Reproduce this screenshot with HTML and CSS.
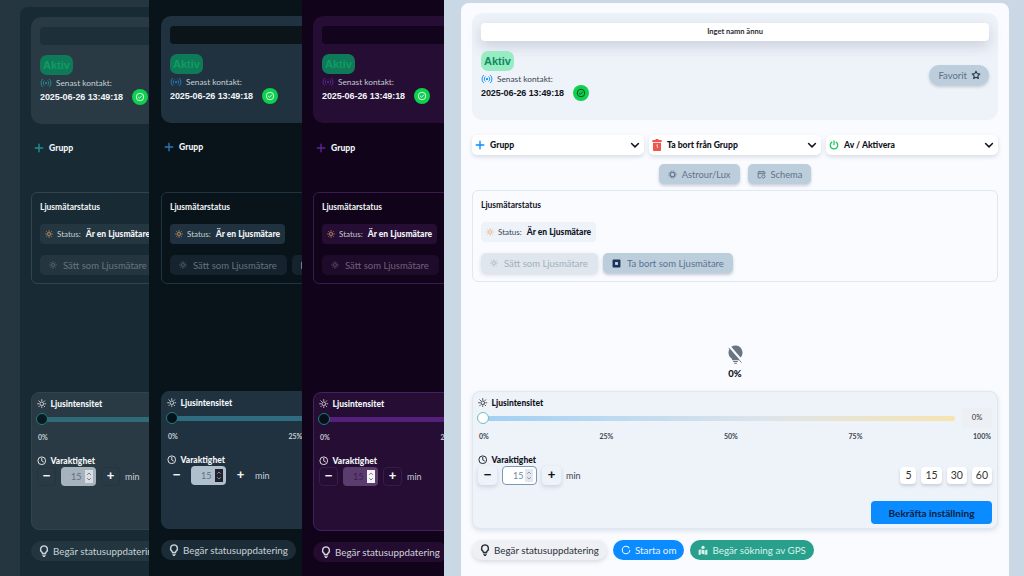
FILE: index.html
```html
<!DOCTYPE html>
<html lang="sv">
<head>
<meta charset="utf-8">
<title>Enhet</title>
<link rel="stylesheet" href="styles.css">
</head>
<body>
<svg class="defs" width="0" height="0">
  <symbol id="i-plus" viewBox="0 0 16 16"><path d="M8 2v12M2 8h12" fill="none" stroke="currentColor" stroke-width="2.200" stroke-linecap="round"/></symbol>
  <symbol id="i-chev" viewBox="0 0 16 16"><path d="M2.500 5.500 8 11l5.500-5.500" fill="none" stroke="currentColor" stroke-width="2.400" stroke-linecap="round" stroke-linejoin="round"/></symbol>
  <symbol id="i-trash" viewBox="0 0 14 18"><path d="M5 0h4l.5 1.500H13a1 1 0 0 1 1 1V4.500H0V2.500a1 1 0 0 1 1-1h3.500zM1 5.500h12V17a1 1 0 0 1-1 1H2a1 1 0 0 1-1-1z" fill="currentColor"/><path d="M6 9.500 7.500 8.500v5" fill="none" stroke="#fff" stroke-width="1"/></symbol>
  <symbol id="i-power" viewBox="0 0 16 16"><path d="M8 1.500v6M4.500 3.500a6 6 0 1 0 7 0" fill="none" stroke="currentColor" stroke-width="2" stroke-linecap="round"/></symbol>
  <symbol id="i-gear" viewBox="0 0 16 16"><circle cx="8" cy="8" r="4" fill="none" stroke="currentColor" stroke-width="2"/><circle cx="8" cy="8" r="6.300" fill="none" stroke="currentColor" stroke-width="1.400" stroke-dasharray="2 1.300"/></symbol>
  <symbol id="i-cal" viewBox="0 0 16 16"><path d="M7 14H3a1 1 0 0 1-1-1V4a1 1 0 0 1 1-1h10a1 1 0 0 1 1 1v3M2 6.500h12M5 1.500v3M11 1.500v3" fill="none" stroke="currentColor" stroke-width="1.600"/><circle cx="11.500" cy="11.500" r="2.800" fill="none" stroke="currentColor" stroke-width="1.600"/></symbol>
  <symbol id="i-sun" viewBox="0 0 16 16"><circle cx="8" cy="8" r="3" fill="none" stroke="currentColor" stroke-width="1.300"/><path d="M8 1v2M8 13v2M1 8h2M13 8h2M3 3l1.500 1.500M11.500 11.500 13 13M3 13l1.500-1.500M11.500 4.500 13 3" stroke="currentColor" stroke-width="1.200" stroke-linecap="round"/></symbol>
  <symbol id="i-signal" viewBox="0 0 16 16"><circle cx="8" cy="8" r="1.500" fill="currentColor"/><path d="M5.500 5a4 4 0 0 0 0 6M10.500 5a4 4 0 0 1 0 6M3.300 3a7 7 0 0 0 0 10M12.700 3a7 7 0 0 1 0 10" fill="none" stroke="currentColor" stroke-width="1.200" stroke-linecap="round"/></symbol>
  <symbol id="i-check" viewBox="0 0 16 16"><circle cx="8" cy="8" r="6" fill="none" stroke="currentColor" stroke-width="1.400"/><path d="m5.500 8.300 1.800 1.700 3.300-3.600" fill="none" stroke="currentColor" stroke-width="1.400" stroke-linecap="round" stroke-linejoin="round"/></symbol>
  <symbol id="i-star" viewBox="0 0 16 16"><path d="m8 1.800 1.900 4 4.400.5-3.300 3 .9 4.400L8 11.500l-3.900 2.200.9-4.400-3.300-3 4.400-.5z" fill="none" stroke="currentColor" stroke-width="1.700" stroke-linejoin="round"/></symbol>
  <symbol id="i-clock" viewBox="0 0 16 16"><circle cx="8" cy="8" r="6.500" fill="none" stroke="currentColor" stroke-width="1.500"/><path d="M8 4v4.300l2.800 1.500" fill="none" stroke="currentColor" stroke-width="1.500" stroke-linecap="round"/></symbol>
  <symbol id="i-bulb" viewBox="0 0 16 20"><path d="M8 1.500a5.800 5.800 0 0 0-3.600 10.300c.8.700 1.100 1.500 1.100 2.400h5c0-.9.300-1.700 1.100-2.400A5.800 5.800 0 0 0 8 1.500z" fill="none" stroke="currentColor" stroke-width="2.400"/><path d="M5 17h6M6.200 19.200h3.600" stroke="currentColor" stroke-width="1.700"/></symbol>
  <symbol id="i-bulboff" viewBox="0 0 16 20"><path d="M8 .5a7.500 7.500 0 0 0-4.800 13.200c.8.700 1.300 1.400 1.300 2.300h7c0-.9.500-1.600 1.300-2.300A7.500 7.500 0 0 0 8 .5z" fill="currentColor"/><path d="M5.500 17.500h5M6.500 19.300h3" stroke="currentColor" stroke-width="1.200"/><path d="m1.500 1.500 14 16" stroke="#fafbff" stroke-width="2.600"/><path d="m.8 3 13.700 15.800" stroke="currentColor" stroke-width=".9"/></symbol>
  <symbol id="i-ring" viewBox="0 0 16 16"><circle cx="8" cy="8" r="6" fill="none" stroke="currentColor" stroke-width="1.700" stroke-dasharray="34 4"/></symbol>
  <symbol id="i-map" viewBox="0 0 16 16"><path d="M1 8 4.500 6.800V15L1 16zM5.500 7l5 1.300V15l-5-.9zM11.500 8.300 15 7v8l-3.500 1z" fill="currentColor"/><circle cx="8" cy="3.800" r="2.700" fill="currentColor"/></symbol>
  <symbol id="i-box" viewBox="0 0 16 16"><rect x="1" y="1" width="14" height="14" rx="1.500" fill="currentColor"/><rect x="5.500" y="5.500" width="5" height="5" fill="#cfdbe6"/></symbol>
  <symbol id="i-spin" viewBox="0 0 8 14"><path d="m2 5.200 2-2 2 2M2 8.800l2 2 2-2" fill="none" stroke="currentColor" stroke-width="1"/></symbol>
</svg>

<section class="shot shot-one theme-teal dark">
  <div class="window">
    <header class="card">
      <div class="name-bar"></div>
      <div class="card-row">
        <div class="contact">
          <span class="badge">Aktiv</span>
          <div class="last"><svg class="ic signal"><use href="#i-signal"/></svg><span>Senast kontakt:</span></div>
          <div class="stamp"><b>2025-06-26 13:49:18</b><span class="ok"><svg class="ic"><use href="#i-check"/></svg></span></div>
        </div>
        <button class="fav">Favorit <svg class="ic"><use href="#i-star"/></svg></button>
      </div>
    </header>
    <div class="selects">
      <div class="select"><svg class="ic accent"><use href="#i-plus"/></svg><span>Grupp</span><svg class="ic chev"><use href="#i-chev"/></svg></div>
      <div class="select"><svg class="ic red"><use href="#i-trash"/></svg><span>Ta bort från Grupp</span><svg class="ic chev"><use href="#i-chev"/></svg></div>
      <div class="select"><svg class="ic green"><use href="#i-power"/></svg><span>Av / Aktivera</span><svg class="ic chev"><use href="#i-chev"/></svg></div>
    </div>
    <div class="modes">
      <button class="mode wide"><svg class="ic"><use href="#i-gear"/></svg>Astrour/Lux</button>
      <button class="mode"><svg class="ic"><use href="#i-cal"/></svg>Schema</button>
    </div>
    <div class="meter">
      <h3>Ljusmätarstatus</h3>
      <div class="chip"><svg class="ic amber"><use href="#i-sun"/></svg><span class="chip-key">Status:</span><b>Är en Ljusmätare</b></div>
      <div class="meter-btns">
        <button class="meter-btn off"><svg class="ic"><use href="#i-sun"/></svg>Sätt som Ljusmätare</button>
        <button class="meter-btn on"><svg class="ic navy"><use href="#i-box"/></svg><span>Ta bort som Ljusmätare</span></button>
      </div>
    </div>
    <div class="lamp"><svg class="ic lamp-ic"><use href="#i-bulboff"/></svg><b>0%</b></div>
    <div class="dim">
      <h4><svg class="ic"><use href="#i-sun"/></svg>Ljusintensitet</h4>
      <div class="slider"><div class="track"><i class="thumb"></i></div><span class="value">0%</span></div>
      <div class="ticks"><span>0%</span><span>25%</span><span>50%</span><span>75%</span><span>100%</span></div>
      <h4 class="dur"><svg class="ic"><use href="#i-clock"/></svg>Varaktighet</h4>
      <div class="dur-row">
        <button class="step">−</button>
        <div class="num"><span>15</span><svg class="spin"><use href="#i-spin"/></svg></div>
        <button class="step">+</button>
        <span class="unit">min</span>
        <div class="presets"><button>5</button><button>15</button><button>30</button><button>60</button></div>
      </div>
      <div class="confirm-row"><button class="confirm">Bekräfta inställning</button></div>
    </div>
    <footer class="actions">
      <button class="pill grey"><svg class="ic"><use href="#i-bulb"/></svg>Begär statusuppdatering</button>
      <button class="pill blue"><svg class="ic"><use href="#i-ring"/></svg><span>Starta om</span></button>
      <button class="pill teal"><svg class="ic"><use href="#i-map"/></svg>Begär sökning av GPS</button>
    </footer>
  </div>
</section>

<section class="shot shot-two theme-navy dark">
  <div class="window">
    <header class="card">
      <div class="name-bar"></div>
      <div class="card-row">
        <div class="contact">
          <span class="badge">Aktiv</span>
          <div class="last"><svg class="ic signal"><use href="#i-signal"/></svg><span>Senast kontakt:</span></div>
          <div class="stamp"><b>2025-06-26 13:49:18</b><span class="ok"><svg class="ic"><use href="#i-check"/></svg></span></div>
        </div>
        <button class="fav">Favorit <svg class="ic"><use href="#i-star"/></svg></button>
      </div>
    </header>
    <div class="selects">
      <div class="select"><svg class="ic accent"><use href="#i-plus"/></svg><span>Grupp</span><svg class="ic chev"><use href="#i-chev"/></svg></div>
      <div class="select"><svg class="ic red"><use href="#i-trash"/></svg><span>Ta bort från Grupp</span><svg class="ic chev"><use href="#i-chev"/></svg></div>
      <div class="select"><svg class="ic green"><use href="#i-power"/></svg><span>Av / Aktivera</span><svg class="ic chev"><use href="#i-chev"/></svg></div>
    </div>
    <div class="modes">
      <button class="mode wide"><svg class="ic"><use href="#i-gear"/></svg>Astrour/Lux</button>
      <button class="mode"><svg class="ic"><use href="#i-cal"/></svg>Schema</button>
    </div>
    <div class="meter">
      <h3>Ljusmätarstatus</h3>
      <div class="chip"><svg class="ic amber"><use href="#i-sun"/></svg><span class="chip-key">Status:</span><b>Är en Ljusmätare</b></div>
      <div class="meter-btns">
        <button class="meter-btn off"><svg class="ic"><use href="#i-sun"/></svg>Sätt som Ljusmätare</button>
        <button class="meter-btn on"><svg class="ic navy"><use href="#i-box"/></svg><span>Ta bort som Ljusmätare</span></button>
      </div>
    </div>
    <div class="lamp"><svg class="ic lamp-ic"><use href="#i-bulboff"/></svg><b>0%</b></div>
    <div class="dim">
      <h4><svg class="ic"><use href="#i-sun"/></svg>Ljusintensitet</h4>
      <div class="slider"><div class="track"><i class="thumb"></i></div><span class="value">0%</span></div>
      <div class="ticks"><span>0%</span><span>25%</span><span>50%</span><span>75%</span><span>100%</span></div>
      <h4 class="dur"><svg class="ic"><use href="#i-clock"/></svg>Varaktighet</h4>
      <div class="dur-row">
        <button class="step">−</button>
        <div class="num"><span>15</span><svg class="spin"><use href="#i-spin"/></svg></div>
        <button class="step">+</button>
        <span class="unit">min</span>
        <div class="presets"><button>5</button><button>15</button><button>30</button><button>60</button></div>
      </div>
      <div class="confirm-row"><button class="confirm">Bekräfta inställning</button></div>
    </div>
    <footer class="actions">
      <button class="pill grey"><svg class="ic"><use href="#i-bulb"/></svg>Begär statusuppdatering</button>
      <button class="pill blue"><svg class="ic"><use href="#i-ring"/></svg><span>Starta om</span></button>
      <button class="pill teal"><svg class="ic"><use href="#i-map"/></svg>Begär sökning av GPS</button>
    </footer>
  </div>
</section>

<section class="shot shot-three theme-plum dark">
  <div class="window">
    <header class="card">
      <div class="name-bar"></div>
      <div class="card-row">
        <div class="contact">
          <span class="badge">Aktiv</span>
          <div class="last"><svg class="ic signal"><use href="#i-signal"/></svg><span>Senast kontakt:</span></div>
          <div class="stamp"><b>2025-06-26 13:49:18</b><span class="ok"><svg class="ic"><use href="#i-check"/></svg></span></div>
        </div>
        <button class="fav">Favorit <svg class="ic"><use href="#i-star"/></svg></button>
      </div>
    </header>
    <div class="selects">
      <div class="select"><svg class="ic accent"><use href="#i-plus"/></svg><span>Grupp</span><svg class="ic chev"><use href="#i-chev"/></svg></div>
      <div class="select"><svg class="ic red"><use href="#i-trash"/></svg><span>Ta bort från Grupp</span><svg class="ic chev"><use href="#i-chev"/></svg></div>
      <div class="select"><svg class="ic green"><use href="#i-power"/></svg><span>Av / Aktivera</span><svg class="ic chev"><use href="#i-chev"/></svg></div>
    </div>
    <div class="modes">
      <button class="mode wide"><svg class="ic"><use href="#i-gear"/></svg>Astrour/Lux</button>
      <button class="mode"><svg class="ic"><use href="#i-cal"/></svg>Schema</button>
    </div>
    <div class="meter">
      <h3>Ljusmätarstatus</h3>
      <div class="chip"><svg class="ic amber"><use href="#i-sun"/></svg><span class="chip-key">Status:</span><b>Är en Ljusmätare</b></div>
      <div class="meter-btns">
        <button class="meter-btn off"><svg class="ic"><use href="#i-sun"/></svg>Sätt som Ljusmätare</button>
        <button class="meter-btn on"><svg class="ic navy"><use href="#i-box"/></svg><span>Ta bort som Ljusmätare</span></button>
      </div>
    </div>
    <div class="lamp"><svg class="ic lamp-ic"><use href="#i-bulboff"/></svg><b>0%</b></div>
    <div class="dim">
      <h4><svg class="ic"><use href="#i-sun"/></svg>Ljusintensitet</h4>
      <div class="slider"><div class="track"><i class="thumb"></i></div><span class="value">0%</span></div>
      <div class="ticks"><span>0%</span><span>25%</span><span>50%</span><span>75%</span><span>100%</span></div>
      <h4 class="dur"><svg class="ic"><use href="#i-clock"/></svg>Varaktighet</h4>
      <div class="dur-row">
        <button class="step">−</button>
        <div class="num"><span>15</span><svg class="spin"><use href="#i-spin"/></svg></div>
        <button class="step">+</button>
        <span class="unit">min</span>
        <div class="presets"><button>5</button><button>15</button><button>30</button><button>60</button></div>
      </div>
      <div class="confirm-row"><button class="confirm">Bekräfta inställning</button></div>
    </div>
    <footer class="actions">
      <button class="pill grey"><svg class="ic"><use href="#i-bulb"/></svg>Begär statusuppdatering</button>
      <button class="pill blue"><svg class="ic"><use href="#i-ring"/></svg><span>Starta om</span></button>
      <button class="pill teal"><svg class="ic"><use href="#i-map"/></svg>Begär sökning av GPS</button>
    </footer>
  </div>
</section>

<section class="shot shot-four theme-light">
  <div class="window">
    <header class="card">
      <div class="name-bar">Inget namn ännu</div>
      <div class="card-row">
        <div class="contact">
          <span class="badge">Aktiv</span>
          <div class="last"><svg class="ic signal"><use href="#i-signal"/></svg><span>Senast kontakt:</span></div>
          <div class="stamp"><b>2025-06-26 13:49:18</b><span class="ok"><svg class="ic"><use href="#i-check"/></svg></span></div>
        </div>
        <button class="fav">Favorit <svg class="ic"><use href="#i-star"/></svg></button>
      </div>
    </header>
    <div class="selects">
      <div class="select"><svg class="ic accent"><use href="#i-plus"/></svg><span>Grupp</span><svg class="ic chev"><use href="#i-chev"/></svg></div>
      <div class="select"><svg class="ic red"><use href="#i-trash"/></svg><span>Ta bort från Grupp</span><svg class="ic chev"><use href="#i-chev"/></svg></div>
      <div class="select"><svg class="ic green"><use href="#i-power"/></svg><span>Av / Aktivera</span><svg class="ic chev"><use href="#i-chev"/></svg></div>
    </div>
    <div class="modes">
      <button class="mode wide"><svg class="ic"><use href="#i-gear"/></svg>Astrour/Lux</button>
      <button class="mode"><svg class="ic"><use href="#i-cal"/></svg>Schema</button>
    </div>
    <div class="meter">
      <h3>Ljusmätarstatus</h3>
      <div class="chip"><svg class="ic amber"><use href="#i-sun"/></svg><span class="chip-key">Status:</span><b>Är en Ljusmätare</b></div>
      <div class="meter-btns">
        <button class="meter-btn off"><svg class="ic"><use href="#i-sun"/></svg>Sätt som Ljusmätare</button>
        <button class="meter-btn on"><svg class="ic navy"><use href="#i-box"/></svg><span>Ta bort som Ljusmätare</span></button>
      </div>
    </div>
    <div class="lamp"><svg class="ic lamp-ic"><use href="#i-bulboff"/></svg><b>0%</b></div>
    <div class="dim">
      <h4><svg class="ic"><use href="#i-sun"/></svg>Ljusintensitet</h4>
      <div class="slider"><div class="track"><i class="thumb"></i></div><span class="value">0%</span></div>
      <div class="ticks"><span>0%</span><span>25%</span><span>50%</span><span>75%</span><span>100%</span></div>
      <h4 class="dur"><svg class="ic"><use href="#i-clock"/></svg>Varaktighet</h4>
      <div class="dur-row">
        <button class="step">−</button>
        <div class="num"><span>15</span><svg class="spin"><use href="#i-spin"/></svg></div>
        <button class="step">+</button>
        <span class="unit">min</span>
        <div class="presets"><button>5</button><button>15</button><button>30</button><button>60</button></div>
      </div>
      <div class="confirm-row"><button class="confirm">Bekräfta inställning</button></div>
    </div>
    <footer class="actions">
      <button class="pill grey"><svg class="ic"><use href="#i-bulb"/></svg>Begär statusuppdatering</button>
      <button class="pill blue"><svg class="ic"><use href="#i-ring"/></svg><span>Starta om</span></button>
      <button class="pill teal"><svg class="ic"><use href="#i-map"/></svg>Begär sökning av GPS</button>
    </footer>
  </div>
</section>
</body>
</html>
```
FILE: styles.css
```css
* { box-sizing: border-box; }
html, body { margin: 0; height: 100%; overflow: hidden; }
body { position: relative; width: 1024px; height: 576px; background: #0a1319; font-family: "Lato", "Noto Sans", sans-serif; }
.defs { position: absolute; }
button { font-family: inherit; border: 0; padding: 0; cursor: pointer; }
h3, h4 { margin: 0; }
.ic { width: 10px; height: 10px; flex: none; display: block; }

/* desktop windows */
.shot { position: absolute; top: 0; height: 576px; overflow: hidden; background: var(--outer); }
.shot-one { left: 0; width: 149px; }
.shot-two { left: 149px; width: 153px; }
.shot-three { left: 302px; width: 142px; }
.shot-four { left: 444px; width: 580px; }
.window { width: 548px; height: 600px; margin-left: var(--mx); margin-top: var(--my); padding: 10px 11px; background: var(--window); border-radius: 8px; }
.shot-one { --mx: 20px; --my: 7px; --sel-gap: 14px; --meter-top: 5px; --dim-top: 108px; --dim-h: 138px; }
.shot-two { --mx: 1px; --my: 6px; --sel-gap: 14px; --meter-top: 6px; --dim-top: 107px; --dim-h: 138px; }
.shot-three { --mx: 0px; --my: 6px; --sel-gap: 15px; --meter-top: 5px; --dim-top: 108px; --dim-h: 139px; }
.shot-four { --mx: 17px; --my: 3px; --sel-gap: 15px; --meter-top: 6px; --dim-top: 0; --dim-h: 138px; }

/* parts that lie fully behind the next window */
.dark .fav, .dark .select:nth-child(n+2), .dark .mode, .dark .value, .dark .presets, .dark .confirm,
.dark .pill.teal, .dark .ticks span:nth-child(n+3), .shot-one .ticks span:nth-child(2),
.shot-one .meter-btn.on, .shot-three .meter-btn.on, .shot-one .pill.blue, .shot-three .pill.blue,
.shot-two .meter-btn.on span, .shot-two .pill.blue span, .shot-two .pill.blue .ic { visibility: hidden; }

/* themes */
.theme-teal { --outer: #263640; --window: #182a33; --card: #293a44; --bar: #1d2f38; --text: #f2f5f7; --soft: #c6d0d6; --line: #31444f; --accent: #1f8f96; --chip: #243640; --btn: #243540; --btn-t: #67767f; --track: #2e6a78; --thumb: #0b1a22; --num: #a6b2bc; --num-t: #5f6f7c; --spin: #d8dee4; --spin-a: #6a7680; --stepl: #233640; --pill: #233640; --pill-t: #c8d2d8; --selshadow: none; --sel: transparent; }
.theme-navy { --outer: #09141a; --window: #09141a; --card: #20323f; --bar: #0a1419; --text: #f2f5f7; --soft: #c6d0d6; --line: #1f3340; --accent: #2a78b5; --chip: #20323f; --btn: #14232d; --btn-t: #64747e; --track: #2f6c80; --thumb: #07111a; --num: #b0bfcc; --num-t: #5f7080; --spin: #22222e; --spin-a: #8b93a0; --stepl: #20323f; --pill: #1c2c37; --pill-t: #c8d2d8; --selshadow: none; --sel: transparent; }
.theme-plum { --outer: #10031a; --window: #10031a; --card: #250d33; --bar: #12041c; --text: #f2f5f7; --soft: #c6c8d2; --line: #3b1a50; --accent: #5f2590; --chip: #250d33; --btn: #1e0a2a; --btn-t: #6e6278; --track: #55207a; --thumb: #07101a; --num: #5a3d6e; --num-t: #3b1a55; --spin: #f4f2f6; --spin-a: #777; --stepl: #3a1a50; --pill: #230c30; --pill-t: #d2d2dc; --selshadow: none; --sel: transparent; }
.theme-light { --outer: #c9d8e4; --window: #fafbff; --card: #eef2f9; --bar: #fff; --text: #10141c; --soft: #3c4650; --line: #dce8f2; --accent: #0a8bff; --chip: #eef2f9; --btn: #dfe6ee; --btn-t: #a3b0bc; --track: linear-gradient(90deg, #9fd0f5, #dde4ea 60%, #f7e4b0); --thumb: #fff; --num: #fff; --num-t: #6a8aa5; --spin: #e4e8ee; --spin-a: #8a94a0; --stepl: #eef2f9; --pill: #eef0f4; --pill-t: #2a3038; --selshadow: 0 2px 4px rgba(90,110,130,.22); --sel: #fff; }

/* header card */
.card { height: 107px; padding: 10px 9px; background: var(--card); border-radius: 10px; }
.name-bar { height: 18px; background: var(--bar); border-radius: 4px; font-size: 7.500px; font-weight: 700; line-height: 18px; text-align: center; color: #2a2d33; }
.theme-light .name-bar { box-shadow: 0 5px 14px rgba(90,105,130,.25); }
.card-row { display: flex; align-items: center; justify-content: space-between; margin-top: 10px; }
.contact { display: flex; flex-direction: column; align-items: flex-start; }
.badge { display: block; width: 33px; height: 20px; background: #0f7a57; color: #0f9c66; border-radius: 7px; font: 700 11px/20px "Liberation Sans", sans-serif; text-align: center; }
.theme-light .badge { background: #98ecc4; color: #0f8a5e; }
.last { display: flex; align-items: center; gap: 4px; height: 13px; margin-top: 1px; font-size: 8.300px; color: var(--soft); }
.signal { width: 12px; height: 12px; color: var(--accent); }
.stamp { display: flex; align-items: center; gap: 9px; color: var(--text); font: 700 9px/16px "Liberation Sans", sans-serif; letter-spacing: -.08px; }
.ok { display: flex; width: 16px; height: 16px; align-items: center; justify-content: center; border-radius: 50%; background: #0fcf4e; color: #f0fff5; }
.theme-light .ok { color: #0d3b24; }
.fav { display: flex; align-items: center; gap: 4px; height: 20px; margin-bottom: 2px; padding: 0 8px 0 9px; border-radius: 10px; background: #bccddc; color: #5c7186; font-size: 9.500px; box-shadow: 0 2px 3px rgba(90,110,130,.3); }
.fav .ic { color: #24384c; }

/* selects */
.selects { display: grid; grid-template-columns: repeat(3, 172px); gap: 5px; margin-top: var(--sel-gap); }
.select { display: flex; align-items: center; gap: 5px; height: 20px; padding: 0 4px 0 3px; background: var(--sel); border-radius: 5px; box-shadow: var(--selshadow); color: var(--text); font-size: 8.600px; font-weight: 900; }
.select > span { flex: 1; }
.chev { width: 10px; height: 10px; color: var(--text); }
.accent { color: var(--accent); }
.red { color: #f0544f; height: 12px; }
.green { color: #12c95a; }

/* mode row */
.modes { display: flex; justify-content: center; gap: 8px; height: 20px; margin-top: 9px; }
.mode { display: flex; align-items: center; gap: 5px; height: 20px; padding: 0 9px; border-radius: 5px; background: #bccddc; color: #5f7488; font-size: 9.300px; box-shadow: 0 2px 3px rgba(90,110,130,.3); }
.mode .ic { width: 9px; height: 9px; }

/* light meter */
.meter { height: 92px; margin-top: var(--meter-top); padding: 9px 8px; border: 1px solid var(--line); border-radius: 6px; }
.meter h3 { font-size: 8.500px; font-weight: 700; line-height: 11px; color: var(--text); }
.chip { display: inline-flex; align-items: center; gap: 4px; height: 20px; margin-top: 11px; padding: 0 5px; background: var(--chip); border-radius: 4px; font-size: 8px; color: var(--soft); }
.chip b { margin-left: 1px; color: var(--text); font-weight: 900; font-size: 8.500px; }
.amber { width: 8px; height: 8px; color: #e8a868; }
.meter-btns { display: flex; gap: 5px; margin-top: 11px; }
.meter-btn { display: flex; align-items: center; gap: 6px; height: 20px; border-radius: 5px; font-size: 9.500px; white-space: nowrap; }
.meter-btn.off { width: 117px; padding-left: 9px; background: var(--btn); color: var(--btn-t); box-shadow: var(--selshadow); }
.meter-btn.on { width: 130px; padding-left: 9px; background: #bccddc; color: #5a7390; box-shadow: 0 2px 3px rgba(90,110,130,.35); }
.dark .meter-btn.on { background: var(--btn); box-shadow: none; }
.navy { color: #1b3558; }
.dark .navy { color: #f4f6f8; }
.meter-btn .ic { width: 8px; height: 8px; }
.meter-btn.on .ic { width: 9px; height: 9px; }

/* lamp */
.lamp { display: none; }
.theme-light .lamp { display: flex; flex-direction: column; align-items: center; justify-content: flex-end; height: 109px; padding-bottom: 12px; gap: 4px; }
.lamp-ic { width: 15px; height: 19px; color: #6b7482; }
.lamp b { font-size: 9.500px; line-height: 11px; font-weight: 900; color: #10141c; }

/* dimmer */
.dim { height: var(--dim-h); margin-top: var(--dim-top); padding: 5px 5px 0; background: var(--card); border: 1px solid var(--line); border-radius: 8px; }
.theme-light .dim { box-shadow: 0 2px 5px rgba(90,110,130,.18); }
.theme-teal .dim { border-color: #2e4450; }
.theme-plum .dim { border-color: #45205e; }
.dim h4 { display: flex; align-items: center; gap: 4px; height: 11px; font-size: 8.500px; font-weight: 900; color: var(--text); }
.dim h4 .ic { width: 9.500px; height: 9.500px; }
.slider { display: flex; align-items: center; gap: 7px; height: 20px; margin-top: 0; }
.track { position: relative; flex: 1; height: 5px; border-radius: 3px; background: var(--track); }
.thumb { position: absolute; left: -1px; top: -3.500px; width: 12px; height: 12px; border-radius: 50%; background: var(--thumb); border: 1.500px solid #1c7f80; }
.theme-light .thumb { border-color: #6fc0b8; }
.value { width: 30px; height: 20px; border-radius: 4px; background: #eceff4; font-size: 7.500px; line-height: 20px; text-align: center; color: #333; }
.ticks { display: flex; justify-content: space-between; margin-top: 3px; padding: 0 1px; font-size: 7px; line-height: 10px; font-weight: 700; color: var(--soft); }
.dim .dur { margin-top: 13px; }
.dur-row { display: flex; align-items: center; height: 20px; }
.step { width: 19px; height: 19px; border-radius: 4px; background: var(--card); border: 1px solid var(--stepl); box-shadow: var(--selshadow); color: var(--text); font: 700 13px/16px "Liberation Sans", sans-serif; }
.num { display: flex; align-items: center; justify-content: space-between; width: 35px; height: 19px; margin: 0 5px; padding: 0 3px 0 10px; border-radius: 4px; background: var(--num); color: var(--num-t); font-size: 9px; }
.theme-light .num { border: 1px solid #7c98b4; }
.spin { display: block; width: 8px; height: 13px; background: var(--spin); color: var(--spin-a); }
.unit { margin-left: 5px; font-size: 9px; color: var(--soft); }
.presets { display: flex; gap: 5px; margin-left: auto; }
.presets button { height: 17px; min-width: 16px; padding: 0 4px; border-radius: 4px; background: #fff; color: #333; font-size: 10.500px; box-shadow: 0 2px 3px rgba(90,110,130,.25); }
.confirm-row { display: flex; justify-content: flex-end; margin-top: 16px; }
.confirm { width: 121px; height: 23px; border-radius: 4px; background: #0a8bff; color: #0c2040; font-size: 10px; font-weight: 700; }

/* actions */
.actions { display: flex; gap: 6px; margin-top: 11px; }
.pill { display: flex; align-items: center; gap: 4px; height: 20px; padding: 0 8px; border-radius: 10px; font-size: 9.800px; white-space: nowrap; }
.pill .ic { width: 10px; height: 12px; }
.pill.grey { background: var(--pill); color: var(--pill-t); box-shadow: var(--selshadow); }
.pill.blue { background: #0a8bff; color: #e8f4ff; }
.pill.teal { background: #29a08c; color: #d8f2ee; }
```
